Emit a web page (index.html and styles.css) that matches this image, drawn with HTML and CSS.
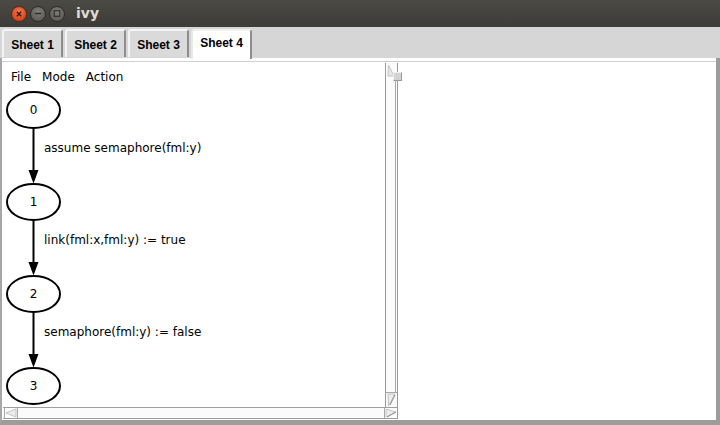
FILE: index.html
```html
<!DOCTYPE html>
<html>
<head>
<meta charset="utf-8">
<link rel="stylesheet" href="styles.css">
</head>
<body>
<div class="win">
  <div class="titlebar">
    <div class="btns">
      <span class="wbtn close"><svg width="16" height="16" viewBox="0 0 16 16"><path d="M5.5 5.5 L10.5 10.5 M10.5 5.5 L5.5 10.5" stroke="#3a1408" stroke-width="1.6" fill="none"/></svg></span>
      <span class="wbtn gray"><svg width="15" height="15" viewBox="0 0 15 15"><path d="M4 7.5 H11" stroke="#2e2d2a" stroke-width="1.5"/></svg></span>
      <span class="wbtn gray"><svg width="15" height="15" viewBox="0 0 15 15"><rect x="4.5" y="4.5" width="6" height="6" stroke="#2e2d2a" stroke-width="1.2" fill="none"/></svg></span>
    </div>
    <span class="title">ivy</span>
  </div>
  <div class="tabbar">
    <div class="tab">Sheet 1</div>
    <div class="tab">Sheet 2</div>
    <div class="tab">Sheet 3</div>
    <div class="tab sel">Sheet 4</div>
  </div>
  <div class="content">
    <div class="topline"></div>
    <div class="inner">
      <div class="leftcol">
        <div class="panerow">
          <div class="left">
            <div class="menu"><span>File</span><span>Mode</span><span>Action</span></div>
            <svg class="graph" width="381" height="319" viewBox="0 0 381 319">
              <g fill="none" stroke="#000" stroke-width="2">
                <ellipse cx="30.5" cy="22" rx="26.5" ry="18"/>
                <ellipse cx="30.5" cy="114" rx="26.5" ry="18"/>
                <ellipse cx="30.5" cy="206" rx="26.5" ry="18"/>
                <ellipse cx="30.5" cy="298" rx="26.5" ry="18"/>
                <line x1="30.5" y1="40" x2="30.5" y2="84"/>
                <line x1="30.5" y1="132" x2="30.5" y2="176"/>
                <line x1="30.5" y1="224" x2="30.5" y2="268"/>
              </g>
              <g fill="#000">
                <polygon points="25.5,82 35.5,82 30.5,95.5"/>
                <polygon points="25.5,174 35.5,174 30.5,187.5"/>
                <polygon points="25.5,266 35.5,266 30.5,279.5"/>
              </g>
              <g class="nodetext" text-anchor="middle">
                <text x="30.5" y="25.5">0</text>
                <text x="30.5" y="117.5">1</text>
                <text x="30.5" y="209.5">2</text>
                <text x="30.5" y="301.5">3</text>
              </g>
              <g class="edgetext">
                <text x="41" y="64">assume semaphore(fml:y)</text>
                <text x="41" y="156">link(fml:x,fml:y) := true</text>
                <text x="41" y="248">semaphore(fml:y) := false</text>
              </g>
            </svg>
          </div>
          <div class="vscroll">
            <svg width="13" height="344" viewBox="0 0 13 344">
              <rect x="0" y="0" width="13" height="344" fill="#fbfbfb"/>
              <line x1="0.5" y1="0" x2="0.5" y2="344" stroke="#9a9a9a"/>
              <line x1="10.5" y1="18" x2="10.5" y2="330" stroke="#a8a8a8"/>
              <line x1="12.5" y1="0" x2="12.5" y2="344" stroke="#9a9a9a"/>
              <polygon points="3,13 9,13 3.5,2" fill="#e6e6e6" stroke="#c4c4c4"/>
              <line x1="1" y1="329.5" x2="12" y2="329.5" stroke="#a8a8a8"/>
              <polygon points="3,331 10,331 3.5,343" fill="#ececec" stroke="#c0c0c0"/>
              <line x1="5" y1="342" x2="10" y2="332" stroke="#8c8c8c"/>
            </svg>
          </div>
        </div>
        <div class="hscroll">
          <svg width="395" height="12" viewBox="0 0 395 12">
            <rect x="0" y="0" width="395" height="12" fill="#fbfbfb"/>
            <line x1="0" y1="0.5" x2="395" y2="0.5" stroke="#9e9e9e"/>
            <line x1="0" y1="11.5" x2="395" y2="11.5" stroke="#9e9e9e"/>
            <line x1="1.5" y1="1" x2="1.5" y2="11" stroke="#a8a8a8"/>
            <line x1="14.5" y1="1" x2="14.5" y2="11" stroke="#a8a8a8"/>
            <polygon points="13,2 13,10 3,6" fill="#ececec" stroke="#c4c4c4"/>
            <line x1="381.5" y1="1" x2="381.5" y2="11" stroke="#a8a8a8"/>
            <line x1="394.5" y1="0" x2="394.5" y2="12" stroke="#9a9a9a"/>
            <polygon points="383,2 383,10 393,5" fill="#ececec" stroke="#c4c4c4"/>
            <line x1="384" y1="10" x2="393" y2="5" stroke="#8c8c8c"/>
          </svg>
        </div>
      </div>
      <div class="right"></div>
    </div>
    <div class="thumb"></div>
  </div>
</div>
</body>
</html>
```
FILE: styles.css
```css
* { box-sizing: border-box; }
html, body { margin: 0; padding: 0; }
body {
  width: 720px;
  height: 425px;
  overflow: hidden;
  background: #3c3b37;
  font-family: "DejaVu Sans", sans-serif;
}
.win {
  width: 720px;
  height: 425px;
  display: flex;
  flex-direction: column;
}
.titlebar {
  height: 27px;
  flex: none;
  background: linear-gradient(#4b4a45, #3c3b37);
  display: flex;
  align-items: center;
  padding-left: 11px;
}
.btns {
  display: flex;
  align-items: center;
  gap: 3px;
}
.wbtn {
  width: 16px;
  height: 16px;
  border-radius: 50%;
  display: flex;
  align-items: center;
  justify-content: center;
}
.wbtn.close {
  background: radial-gradient(circle at 50% 35%, #f47a4e, #d9471c 70%, #b8380f);
  border: 1px solid #5a2a18;
}
.wbtn.gray {
  background: radial-gradient(circle at 50% 35%, #807f79, #5e5d58 75%);
  border: 1px solid #2c2b28;
}
.title {
  margin-left: 11px;
  color: #dfdbd2;
  font-weight: bold;
  font-size: 14px;
  line-height: 16px;
  margin-top: -1px;
}
.tabbar {
  height: 31px;
  flex: none;
  background: #d6d6d6;
  display: flex;
  align-items: flex-end;
  gap: 2px;
  padding-left: 2px;
}
.tab {
  width: 61px;
  height: 28px;
  margin-bottom: 1px;
  background: #dadada;
  border-top: 2px solid #f4f4f4;
  border-left: 2px solid #f4f4f4;
  border-right: 2px solid #8d8d8d;
  border-top-left-radius: 3px;
  border-top-right-radius: 3px;
  font-family: "Liberation Sans", Arial, sans-serif;
  font-weight: bold;
  font-size: 12px;
  color: #000;
  display: flex;
  align-items: center;
  justify-content: center;
  padding-top: 1px;
}
.tab.sel {
  height: 30px;
  margin-bottom: -1px;
  background: #fff;
  border-top-color: #f0f0f0;
  border-left-color: #e8e8e8;
  padding-top: 0;
  padding-bottom: 4px;
  position: relative;
  z-index: 1;
}
.content {
  flex: 1;
  display: flex;
  flex-direction: column;
  background: #fff;
  border-left: 2px solid #a6a6a6;
  border-right: 4px solid #9c9c9c;
  border-bottom: 5px solid #9c9c9c;
  position: relative;
}
.topline {
  height: 1px;
  margin-top: 3px;
  margin-bottom: 1px;
  background: #d0d0d0;
}
.inner {
  flex: 1;
  display: flex;
}
.leftcol {
  width: 396px;
  display: flex;
  flex-direction: column;
  padding-left: 1px;
  padding-bottom: 1px;
}
.panerow {
  flex: 1;
  display: flex;
}
.left {
  flex: 1;
  display: flex;
  flex-direction: column;
}
.menu {
  height: 25px;
  display: flex;
  align-items: center;
  gap: 11px;
  padding-left: 8px;
  padding-top: 2px;
  font-size: 12px;
  color: #000;
}
.graph { display: block; }
.nodetext text {
  font-family: "DejaVu Sans", sans-serif;
  font-size: 12px;
  fill: #000;
}
.edgetext text {
  font-family: "DejaVu Sans", sans-serif;
  font-size: 12px;
  fill: #000;
}
.vscroll {
  width: 13px;
  flex: none;
}
.vscroll svg, .hscroll svg { display: block; }
.hscroll {
  height: 12px;
  flex: none;
}
.right {
  flex: 1;
  background: #fff;
}
.thumb {
  position: absolute;
  left: 391px;
  top: 14px;
  width: 9px;
  height: 9px;
  background: #d2d2d2;
  border-top: 1px solid #f0f0f0;
  border-left: 1px solid #f0f0f0;
  border-right: 1px solid #9a9a9a;
  border-bottom: 1px solid #9a9a9a;
}
```
